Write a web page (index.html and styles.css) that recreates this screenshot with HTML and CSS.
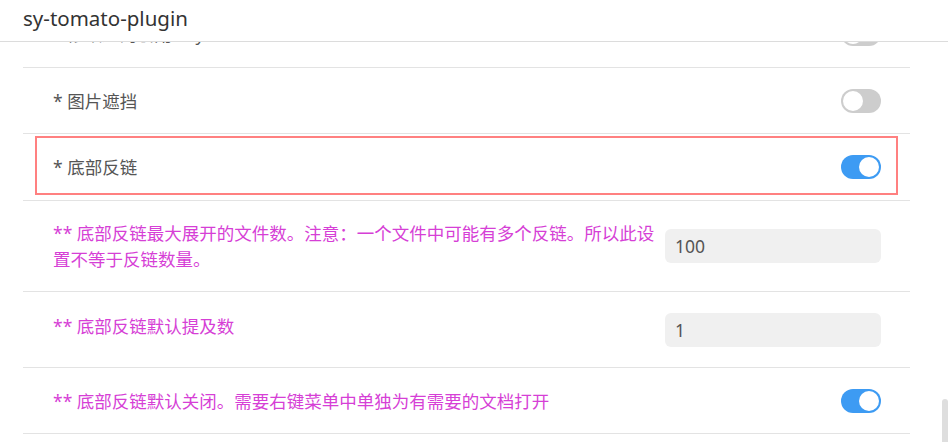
FILE: index.html
```html
<!DOCTYPE html>
<html lang="zh-CN">
<head>
    <meta charset="UTF-8">
    <meta name="viewport" content="width=device-width, initial-scale=1.0">
    <title>sy-tomato-plugin</title>
    <link rel="stylesheet" href="styles.css">
</head>
<body>
    <header class="topbar">
        <span class="title">sy-tomato-plugin</span>
    </header>

    <div class="main">
        <div class="panel">
            <div class="list">
                <div class="row">
                    <div class="cell">
                        <span class="label">* 修改过的引用 key</span>
                        <span class="switch"><span class="knob"></span></span>
                    </div>
                </div>
                <div class="row">
                    <div class="cell">
                        <span class="label">* 图片遮挡</span>
                        <span class="switch"><span class="knob"></span></span>
                    </div>
                </div>
                <div class="row">
                    <div class="cell active">
                        <span class="label">* 底部反链</span>
                        <span class="switch on"><span class="knob"></span></span>
                    </div>
                </div>
                <div class="row">
                    <div class="cell multi">
                        <span class="label sub">** 底部反链最大展开的文件数。注意：一个文件中可能有多个反链。所以此设置不等于反链数量。</span>
                        <input class="field" type="text" value="100">
                    </div>
                </div>
                <div class="row">
                    <div class="cell with-input">
                        <span class="label sub">** 底部反链默认提及数</span>
                        <input class="field" type="text" value="1">
                    </div>
                </div>
                <div class="row">
                    <div class="cell">
                        <span class="label sub">** 底部反链默认关闭。需要右键菜单中单独为有需要的文档打开</span>
                        <span class="switch on"><span class="knob"></span></span>
                    </div>
                </div>
            </div>
        </div>
        <div class="track">
            <div class="thumb"></div>
        </div>
    </div>
</body>
</html>
```

FILE: styles.css
```css
html, body {
    height: 100%;
}
body {
    margin: 0;
    display: flex;
    flex-direction: column;
    background-color: #fff;
    font-family: "Noto Sans", "Noto Sans CJK SC", sans-serif;
    color: #555;
    overflow: hidden;
}
.topbar {
    flex: none;
    height: 37px;
    padding: 0 23px 4px;
    line-height: 36px;
    border-bottom: 1px solid #dcdcdc;
}
.title {
    font-size: 20.5px;
    color: #333;
}
.main {
    flex: 1;
    min-height: 0;
    display: flex;
}
.panel {
    flex: 1;
    min-width: 0;
    overflow: hidden;
    display: flex;
    flex-direction: column;
    justify-content: flex-end;
    padding: 0 32px 8px 23px;
}
.list {
    flex-shrink: 0;
}
.row {
    padding: 2px 12px 5px;
    border-bottom: 1px solid #e3e3e3;
}
.cell {
    display: flex;
    align-items: center;
    min-height: 58px;
    box-sizing: border-box;
    padding: 16px 15px 12px 16px;
    border: 2px solid transparent;
}
.cell.active {
    border-color: #ff8080;
}
.cell.multi {
    padding-top: 15px;
    padding-bottom: 11px;
}
.cell.with-input {
    padding-top: 17px;
    padding-bottom: 13px;
}
.label {
    flex: 1;
    align-self: flex-start;
    margin-right: 8px;
    font-size: 17.5px;
    line-height: 26.5px;
}
.label.sub {
    color: #d63fd6;
}
.switch {
    flex: none;
    display: flex;
    align-items: center;
    width: 40px;
    height: 24px;
    box-sizing: border-box;
    padding: 2px;
    border-radius: 12px;
    background-color: #cdcdcd;
}
.switch.on {
    justify-content: flex-end;
    background-color: #3d9bf3;
}
.knob {
    width: 20px;
    height: 20px;
    border-radius: 50%;
    background-color: #fff;
}
.field {
    flex: none;
    width: 216px;
    height: 34px;
    box-sizing: border-box;
    padding: 0 10px;
    border: none;
    border-radius: 6px;
    background-color: #f0f0f0;
    font-family: "Noto Sans", "Noto Sans CJK SC", sans-serif;
    font-size: 17.5px;
    color: #555;
    outline: none;
}
.track {
    flex: none;
    width: 6px;
    display: flex;
    flex-direction: column;
    justify-content: flex-end;
}
.thumb {
    height: 43px;
    border-radius: 3px 3px 0 0;
    background-color: #dedede;
}
```
